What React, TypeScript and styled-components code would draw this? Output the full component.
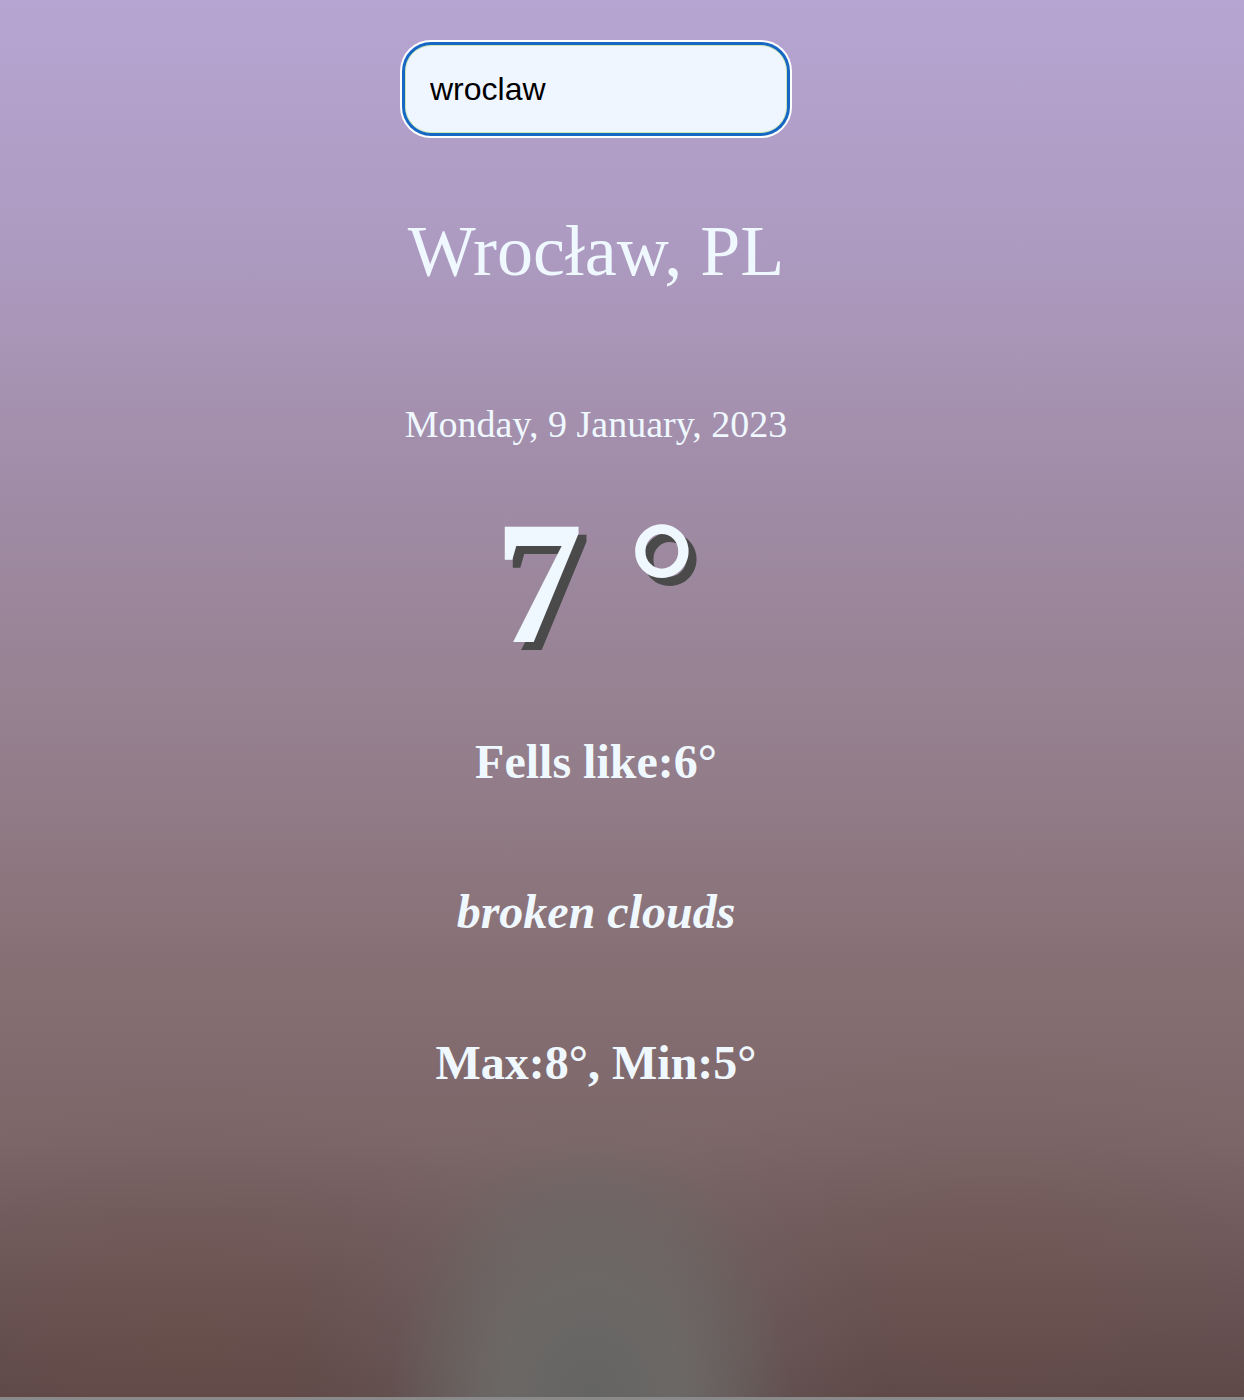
import React from "react";
import styled, { createGlobalStyle } from "styled-components";

const Global = createGlobalStyle`
  html, body {
    margin: 0;
    padding: 0;
    background: #8a8a8a;
  }
  * { box-sizing: border-box; }
`;

const Page = styled.div`
  min-height: 1397px;
  padding: 45px 52px 0 0;
  display: flex;
  flex-direction: column;
  align-items: center;
  font-family: "Liberation Serif", "Times New Roman", serif;
  color: #f0f8ff;
  background:
    radial-gradient(ellipse 200px 260px at 47.5% 100%, rgba(100,100,98,1) 0%, rgba(108,106,104,0.85) 45%, rgba(118,108,106,0) 100%),
    radial-gradient(ellipse 300px 340px at 47.5% 100%, rgba(112,110,108,0.55) 0%, rgba(120,110,108,0) 100%),
    radial-gradient(ellipse 380px 260px at 15% 96%, rgba(112,82,70,0.35) 0%, rgba(110,80,70,0) 100%),
    radial-gradient(ellipse 380px 260px at 80% 93%, rgba(112,82,70,0.3) 0%, rgba(110,80,70,0) 100%),
    linear-gradient(to bottom, #b6a5d2 0%, #ad9ac0 18%, #a08ca6 35%, #95808f 52%, #887176 68%, #7c6668 82%, #5c4748 100%);
`;

const SearchInput = styled.input`
  width: 382px;
  height: 88px;
  border-radius: 26px;
  border: 1px solid #cfe6b4;
  background: #eff6ff;
  padding: 0 0 0 24px;
  font-family: "Liberation Sans", Arial, sans-serif;
  font-size: 32px;
  color: #000;
  outline: none;
  box-shadow: 0 0 0 3px #1767c4, 0 0 0 5px #ffffff;
`;

const City = styled.h1`
  margin: 82px 0 0;
  font-size: 72px;
  font-weight: 400;
  line-height: 1;
`;

const DateLine = styled.p`
  margin: 118px 0 0;
  font-size: 38px;
  line-height: 1;
`;

const Temp = styled.p`
  margin: 52px 0 0;
  font-size: 176px;
  font-weight: 700;
  line-height: 1;
  text-shadow: 8px 8px 0 #4a4a4a;
`;

const Detail = styled.p<{ $gap: number; $italic?: boolean }>`
  margin: ${(p) => p.$gap}px 0 0;
  font-size: 48px;
  font-weight: 700;
  font-style: ${(p) => (p.$italic ? "italic" : "normal")};
  line-height: 1;
`;

export default function App() {
  return (
    <>
      <Global />
      <Page>
        <SearchInput defaultValue="wroclaw" />
        <City>Wrocław, PL</City>
        <DateLine>Monday, 9 January, 2023</DateLine>
        <Temp>7 °</Temp>
        <Detail $gap={67}>Fells like:6°</Detail>
        <Detail $gap={102} $italic>
          broken clouds
        </Detail>
        <Detail $gap={103}>Max:8°, Min:5°</Detail>
      </Page>
    </>
  );
}
